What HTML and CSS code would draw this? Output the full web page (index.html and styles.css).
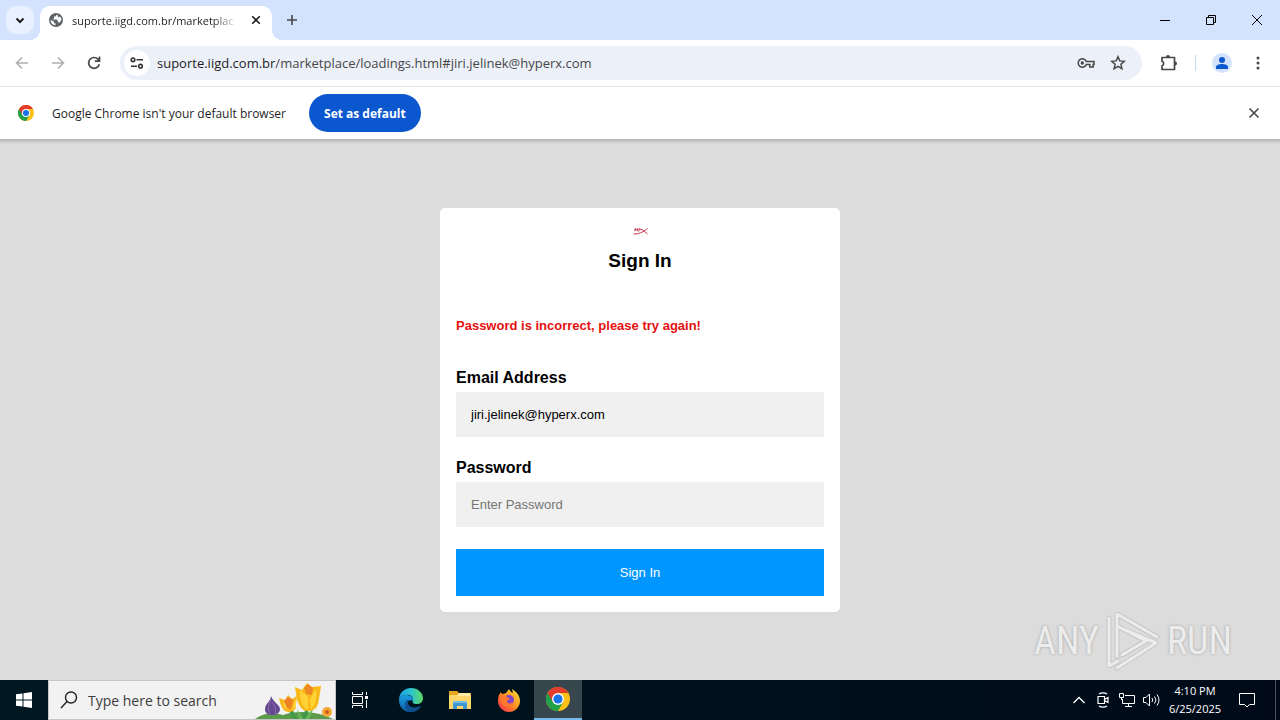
FILE: index.html
```html
<!DOCTYPE html>
<html lang="en">
<head>
  <meta charset="UTF-8">
  <meta name="viewport" content="width=device-width, initial-scale=1.0">
  <title>Sign In</title>
  <link rel="stylesheet" href="styles.css">
</head>
<body>
  <!-- shared logo -->
  <svg class="defs" width="0" height="0" aria-hidden="true">
    <symbol id="chrome" viewBox="0 0 24 24">
      <circle cx="12" cy="12" r="12" fill="#fbc116"/>
      <path d="M12 12 1.6 6A12 12 0 0 0 12 24l5.2-9z" fill="#1fa049"/>
      <path d="M1.6 6A12 12 0 0 1 22.4 6H12l-5.2 9z" fill="#e33b2e"/>
      <circle cx="12" cy="12" r="6" fill="#fff"/>
      <circle cx="12" cy="12" r="4.6" fill="#1a73e8"/>
    </symbol>
  </svg>

  <header class="browser">
    <div class="tabstrip">
      <button class="tab-search" aria-label="Search tabs">
        <svg width="10" height="10" viewBox="0 0 10 10"><path d="M1.5 3.5 5 7l3.5-3.5" fill="none" stroke="#1f1f1f" stroke-width="2"/></svg>
      </button>
      <div class="tab">
        <svg class="globe" width="14" height="14" viewBox="0 0 14 14">
          <circle cx="7" cy="7" r="7" fill="#5f6368"/>
          <path d="M8 1.5 6.5 3.5H5v1.700L3.800 6.500H7.500l1.500 1.500v1.500H10.500L12.500 7a5.500 5.500 0 0 0-1.500-3.500L9 4.500V3zM1.500 7 5 8.500v1.700h1.500v2A5.500 5.500 0 0 1 1.500 7z" fill="#fff"/>
        </svg>
        <span class="tab-title">suporte.iigd.com.br/marketplac</span>
        <button class="tab-close" aria-label="Close tab">
          <svg width="10" height="10" viewBox="0 0 10 10"><path d="m1.200 1.200 7.600 7.600m0-7.600-7.600 7.600" stroke="#1f1f1f" stroke-width="1.600"/></svg>
        </button>
      </div>
      <button class="new-tab" aria-label="New tab">
        <svg width="12" height="12" viewBox="0 0 12 12"><path d="M6 1v10M1 6h10" stroke="#474747" stroke-width="1.600"/></svg>
      </button>
      <div class="window-buttons">
        <button aria-label="Minimize"><svg width="10" height="10" viewBox="0 0 10 10"><path d="M0 5.500h10" stroke="#000"/></svg></button>
        <button aria-label="Restore"><svg width="10" height="10" viewBox="0 0 10 10"><path d="M.5 2.500h7v7h-7zM2.500 2.500v-2h7v7h-2" fill="none" stroke="#000"/></svg></button>
        <button aria-label="Close"><svg width="10" height="10" viewBox="0 0 10 10"><path d="m0 0 10 10M10 0 0 10" stroke="#000"/></svg></button>
      </div>
    </div>

    <div class="toolbar">
      <button class="tool" aria-label="Back">
        <svg width="14" height="14" viewBox="0 0 14 14"><path d="M13 7H2M7 1.500 1.500 7 7 12.500" fill="none" stroke="#b0b0b0" stroke-width="1.600"/></svg>
      </button>
      <button class="tool" aria-label="Forward">
        <svg width="14" height="14" viewBox="0 0 14 14"><path d="M1 7h11M7 1.500 12.500 7 7 12.500" fill="none" stroke="#b0b0b0" stroke-width="1.600"/></svg>
      </button>
      <button class="tool" aria-label="Reload">
        <svg width="14" height="14" viewBox="0 0 14 14"><path d="M12.300 8.200A5.400 5.400 0 1 1 11 3.200l1.300 1.400M12.500.5v4.700H7.800" fill="none" stroke="#474747" stroke-width="1.700"/></svg>
      </button>
      <div class="omnibox">
        <button class="site-info" aria-label="View site information">
          <svg width="14" height="12" viewBox="0 0 14 12" fill="none" stroke="#333" stroke-width="1.600"><circle cx="3" cy="2.800" r="1.800"/><path d="M6.500 2.800H13M1 9.200h6"/><circle cx="10.500" cy="9.200" r="1.800"/></svg>
        </button>
        <p class="url">suporte.iigd.com.br<span>/marketplace/loadings.html#jiri.jelinek@hyperx.com</span></p>
        <button class="omni-icon" aria-label="Manage passwords">
          <svg width="18" height="10" viewBox="0 0 18 10"><path d="M9.300 3.500H17v3h-.8V9h-3.400V6.500H9.300A4.200 4.200 0 1 1 9.300 3.500z" fill="none" stroke="#474747" stroke-width="1.500"/><circle cx="5.300" cy="5" r="1.700" fill="#474747"/></svg>
        </button>
        <button class="omni-icon" aria-label="Bookmark this tab">
          <svg width="16" height="16" viewBox="0 0 16 16"><path d="m8 1.700 1.800 4.200 4.500.4-3.400 3 1 4.400L8 11.400l-3.900 2.300 1-4.400-3.400-3 4.500-.4z" fill="none" stroke="#474747" stroke-width="1.500"/></svg>
        </button>
      </div>
      <button class="extensions" aria-label="Extensions">
        <svg width="18" height="18" viewBox="0 0 18 18"><path d="M2 3.500h12.500v12H2v-3.800a2.300 2.300 0 0 0 0-4.400z" fill="none" stroke="#474747" stroke-width="1.700" stroke-linejoin="round"/><path d="M6 3a2 2 0 0 1 4 0zM15 7.500a2 2 0 0 1 0 4z" fill="#474747"/></svg>
      </button>
      <span class="divider"></span>
      <button class="profile" aria-label="You">
        <svg width="20" height="20" viewBox="0 0 20 20"><circle cx="10" cy="10" r="10" fill="#d3e3fd"/><circle cx="10" cy="7" r="3" fill="#0b57d0"/><path d="M4 16v-2c0-2 3-3 6-3s6 1 6 3v2z" fill="#0b57d0"/></svg>
      </button>
      <button class="menu" aria-label="Menu">
        <svg width="4" height="16" viewBox="0 0 4 16" fill="#474747"><circle cx="2" cy="3" r="1.500"/><circle cx="2" cy="8" r="1.500"/><circle cx="2" cy="13" r="1.500"/></svg>
      </button>
    </div>

    <div class="infobar">
      <svg width="16" height="16"><use href="#chrome"/></svg>
      <p>Google Chrome isn't your default browser</p>
      <button class="set-default">Set as default</button>
      <button class="infobar-close" aria-label="Dismiss">
        <svg width="12" height="12" viewBox="0 0 12 12"><path d="m1.500 1.500 9 9m0-9-9 9" stroke="#474747" stroke-width="1.600"/></svg>
      </button>
    </div>
  </header>

  <main class="page">
    <form class="card">
      <svg class="logo" width="16" height="16" viewBox="0 0 16 16" fill="none" stroke="#c8324a"><path d="m3.500 4-.8 3M6 4l-.8 3M3 5.800h2.500M7.500 4.500l-.8 3M7.500 5l2 .5M9 5.500c2 .5 4 2.500 6.500 4.500M15.500 4.500c-3 2-6 5.500-14 5.500"/></svg>
      <h1>Sign In</h1>
      <p class="error">Password is incorrect, please try again!</p>
      <label for="email">Email Address</label>
      <input type="email" id="email" name="email" value="jiri.jelinek@hyperx.com">
      <label for="password">Password</label>
      <input type="password" id="password" name="password" placeholder="Enter Password">
      <button type="button" class="submit">Sign In</button>
    </form>

    <div class="watermark">
      <span>ANY</span>
      <svg width="58" height="62" viewBox="0 0 58 62" fill="none" stroke-linejoin="round" stroke-linecap="round">
        <path d="M5 8v48l9-5M13 46V4l40 23M19 19l33 14-39 25M15 17l27 14-24 14" stroke="#c6c6c6" stroke-width="5"/>
        <path d="M5 8v48l9-5M13 46V4l40 23M19 19l33 14-39 25M15 17l27 14-24 14" stroke="#ececec" stroke-width="3"/>
      </svg>
      <span>RUN</span>
    </div>
  </main>

  <footer class="taskbar">
    <button class="start" aria-label="Start">
      <svg width="16" height="16" viewBox="0 0 16 16" fill="#fff"><path d="m0 2.300 6.500-.9v6.100H0zM7.500 1.200 16 0v7.500H7.500zM0 8.500h6.500v6.100L0 13.700zM7.500 8.500H16V16l-8.500-1.200z"/></svg>
    </button>
    <div class="search">
      <svg class="lens" width="18" height="18" viewBox="0 0 18 18" fill="none" stroke="#222" stroke-width="1.400"><circle cx="11" cy="6.500" r="5.500"/><path d="m7 10.500-6 6.500"/></svg>
      <input type="text" aria-label="Search" placeholder="Type here to search">
      <svg class="flowers" width="80" height="38" viewBox="0 0 80 38">
        <path d="M0 38c8-6 18-7 28-4 12-5 36-4 50 4z" fill="#5c9a4c"/>
        <path d="M33 24c0 6 3 10 6 14h3c-2-5-5-9-5-14zM51 22c0 8-3 12-5 16h4c3-4 4-9 4-16z" fill="#3d9b46"/>
        <path d="m42 28 6 10h-4zM60 24l-6 14h-4z" fill="#67ba55"/>
        <path d="M16 15c0 5-6 8-6 13 0 4 3 6 7 6s8-2 8-6-7-7-9-13z" fill="#65488f"/>
        <path d="M16 18c-3 6-3 11-1 16M17 21c4 5 4 9 3 13" stroke="#8a6db5" fill="none"/>
        <path d="m24 17 6 2 3-5 4 4 5-3-1 9c0 5-3 7-7 7-5 0-8-4-10-14z" fill="#f7b51b"/>
        <path d="m29 20 4-4 5 3-2 9-4-1z" fill="#ec8125"/>
        <path d="m28 20 5 9-4-3zM41 17l-4 12 4-4z" fill="#ffd840"/>
        <path d="m40 6 7 3 5-7 5 4 9-1-2 13c-1 9-5 12-11 12-8 0-11-8-13-24z" fill="#f9b916"/>
        <path d="m49 7 4-4 5 4-1 7-6-1z" fill="#ee8724"/>
        <path d="m45 9 8 7v13c-6-3-8-10-8-20zM61 8l-6 10 1 10c5-4 6-12 5-20z" fill="#ffd335"/>
        <circle cx="72" cy="31" r="5" fill="#f7a534"/><circle cx="72" cy="31" r="2" fill="#c75c1d"/>
      </svg>
    </div>
    <button class="task task-view" aria-label="Task View">
      <svg width="18" height="16" viewBox="0 0 18 16" fill="none" stroke="#fff"><path d="M1.500 0v2.500h10V0M1.500 16v-2.500h10V16M1.500 4.500h10v7h-10zM15.500 0v3M15.500 8v8"/><path d="M14 4h3v3h-3z" fill="#fff" stroke="none"/></svg>
    </button>
    <button class="task" aria-label="Microsoft Edge">
      <svg width="24" height="24" viewBox="0 0 24 24">
        <defs>
          <linearGradient id="edge-top" x1="0" x2="1"><stop offset="0" stop-color="#1b9de2"/><stop offset=".5" stop-color="#2cc4d0"/><stop offset="1" stop-color="#62d861"/></linearGradient>
          <linearGradient id="edge-bottom" x2="0" y2="1"><stop offset="0" stop-color="#1ba1e2"/><stop offset="1" stop-color="#0c59a4"/></linearGradient>
        </defs>
        <path d="M0 12C0 5 5 0 12 0s12 5 12 10c0 4-3 6-6 6-4 0-5-1-4-3C15 9 11 6 7 7c-4 0-7 3-7 5z" fill="url(#edge-top)"/>
        <path d="M0 12c0-3 4-5 8-5 4 0 7 3 6 6-3-2-6 0-5 3 1 4 7 5 13 2-3 4-7 6-11 6C4 24 0 18 0 12z" fill="url(#edge-bottom)"/>
        <path d="M8 12c-4 4-2 11 4 12 4 0 8-2 10-6-6 3-12 2-13-2-1-2 0-3 2-4z" fill="#124f91"/>
      </svg>
    </button>
    <button class="task" aria-label="File Explorer">
      <svg width="22" height="20" viewBox="0 0 22 20"><path d="M0 1h8l2 2h12v16H0z" fill="#e9a520"/><path d="M0 5h22v14H0z" fill="#ffd768"/><path d="M10 3h11v3H8z" fill="#ffe9a3"/><path d="M4 11h14v8h-4v-3H8v3H4z" fill="#3f97d3"/><path d="M4 11h14v2H4z" fill="#76bce8"/></svg>
    </button>
    <button class="task" aria-label="Firefox">
      <svg width="24" height="24" viewBox="0 0 24 24">
        <defs><linearGradient id="fox" x1="1" x2="0" y2="1"><stop offset="0" stop-color="#ffe53c"/><stop offset=".5" stop-color="#ff8f20"/><stop offset="1" stop-color="#f5205b"/></linearGradient></defs>
        <path d="M4 4c0 1 1 2 2 2l3-1 3-4c1 2 2 3 4 4l-1-4c5 3 8 7 8 12 0 6-5 11-11 11S1 19 1 13c0-4 1-7 3-9z" fill="url(#fox)"/>
        <circle cx="12" cy="12" r="5" fill="#8245c8"/>
        <path d="M4 8c3-1 6 0 7 2h2c0 2-3 2-3 3 0 3 4 3 6 1-1 4-7 6-10 3-2-2-3-6-2-9z" fill="#ff7a2d"/>
      </svg>
    </button>
    <button class="task active" aria-label="Google Chrome">
      <svg width="24" height="24"><use href="#chrome"/></svg>
    </button>
    <div class="tray">
      <button aria-label="Show hidden icons"><svg width="12" height="8" viewBox="0 0 12 8"><path d="m.5 7 5.500-5.500L11.500 7" fill="none" stroke="#fff" stroke-width="1.300"/></svg></button>
      <button aria-label="Meet Now"><svg width="12" height="16" viewBox="0 0 12 16" fill="none" stroke="#fff" stroke-width="1.200"><path d="M1 4.500h6.500v7H1zM7.500 7.500 11 5.500v5L7.500 8.500M2 2c2-1.600 6-1.600 8 0M2 14c2 1.600 6 1.600 8 0"/></svg></button>
      <button aria-label="Network"><svg width="16" height="14" viewBox="0 0 16 14" fill="none" stroke="#fff"><path d="M6 2.500h9.500v8h-12V6M9.500 10.500v3M6 13.500h7M.5.500h4v4h-4zM2.500 4.500V7"/></svg></button>
      <button aria-label="Volume"><svg width="17" height="14" viewBox="0 0 17 14" fill="none" stroke="#fff"><path d="M.5 4.500H3L6.500 1v12L3 9.500H.5zM9 5q1.500 2 0 4M11.500 3.500q3 3.500 0 7M14 1.500q4 5.500 0 11"/></svg></button>
      <div class="clock"><span>4:10 PM</span><span>6/25/2025</span></div>
      <button class="notify" aria-label="Notifications"><svg width="16" height="16" viewBox="0 0 16 16" fill="none" stroke="#fff"><path d="M.5 1.500h15v11h-5L8 15l-2.500-2.500h-5z"/></svg></button>
    </div>
  </footer>
</body>
</html>
```
FILE: styles.css
```css
* {
  box-sizing: border-box;
}
body {
  margin: 0;
  min-height: 100vh;
  display: flex;
  flex-direction: column;
  font-family: "Open Sans", "Noto Sans", sans-serif;
  font-size: 12px;
  color: #1f1f1f;
}
button {
  display: flex;
  align-items: center;
  justify-content: center;
  padding: 0;
  border: none;
  background: none;
  font-family: inherit;
  cursor: pointer;
}
p {
  margin: 0;
}
svg {
  display: block;
  flex-shrink: 0;
}
.defs {
  position: absolute;
}

/* browser */
.tabstrip {
  display: flex;
  height: 40px;
  padding-left: 6px;
  background: #d3e3fd;
}
.tab-search {
  width: 28px;
  height: 28px;
  margin-top: 6px;
  border-radius: 10px;
  background: #e9f1fe;
}
.tab {
  position: relative;
  display: flex;
  align-items: center;
  width: 232px;
  height: 34px;
  margin: 6px 0 0 6px;
  padding: 0 9px 6px;
  border-radius: 10px 10px 0 0;
  background: #fff;
}
.tab::before,
.tab::after {
  content: "";
  position: absolute;
  bottom: 0;
  width: 10px;
  height: 10px;
}
.tab::before {
  left: -10px;
  background: radial-gradient(circle at 0 0, #d3e3fd 10px, #fff 10px);
}
.tab::after {
  right: -10px;
  background: radial-gradient(circle at 100% 0, #d3e3fd 10px, #fff 10px);
}
.tab-title {
  flex: 1;
  margin-left: 9px;
  white-space: nowrap;
  font-size: 11px;
  -webkit-mask-image: linear-gradient(to right, #000 85%, transparent);
  mask-image: linear-gradient(to right, #000 85%, transparent);
}
.tab-close {
  width: 14px;
  height: 20px;
  margin-left: 11px;
}
.new-tab {
  width: 28px;
  height: 28px;
  margin: 6px 0 0 6px;
}
.window-buttons {
  display: flex;
  margin-left: auto;
}
.window-buttons button {
  width: 46px;
}
.toolbar {
  display: flex;
  align-items: center;
  height: 47px;
  padding: 0 14px 0 4px;
  border-bottom: 1px solid #e1e3e1;
  background: #fff;
}
.tool {
  width: 36px;
  height: 34px;
}
.omnibox {
  flex: 1;
  display: flex;
  align-items: center;
  height: 34px;
  margin-left: 8px;
  padding: 0 12px 0 4px;
  border-radius: 17px;
  background: #ecf0f9;
}
.site-info {
  width: 26px;
  height: 26px;
  border-radius: 50%;
  background: #fff;
}
.url {
  flex: 1;
  margin-left: 7px;
  font-size: 13px;
}
.url span {
  color: #474747;
}
.omni-icon {
  width: 24px;
  height: 24px;
  margin-left: 8px;
}
.extensions {
  margin-left: 18px;
}
.divider {
  width: 1px;
  height: 16px;
  margin: 0 16px 0 17px;
  background: #c7d5ee;
}
.menu {
  width: 16px;
  margin-left: 18px;
}
.infobar {
  display: flex;
  align-items: center;
  height: 53px;
  padding: 0 20px 0 18px;
  border-bottom: 1px solid #b8b8b8;
  background: #fff;
}
.infobar p {
  margin: 0 23px 0 18px;
}
.set-default {
  height: 38px;
  padding: 0 15px;
  border-radius: 19px;
  background: #0b57d0;
  color: #fff;
  font-size: 12px;
  font-weight: bold;
}
.infobar-close {
  margin-left: auto;
}

/* page */
.page {
  position: relative;
  flex: 1;
  display: flex;
  align-items: center;
  justify-content: center;
  background: linear-gradient(#bcbcbc, #dcdcdc 4px);
  font-family: Arial, "Liberation Sans", sans-serif;
}
.card {
  display: flex;
  flex-direction: column;
  width: 400px;
  padding: 16px;
  border-radius: 5px;
  background: #fff;
  color: #000;
}
.logo {
  align-self: center;
}
.card h1 {
  margin: 10px 0 45px;
  font-size: 19px;
  line-height: 22px;
  text-align: center;
}
.error {
  margin-bottom: 34px;
  color: #e60f0f;
  font-size: 13px;
  font-weight: bold;
  line-height: 18px;
}
.card label {
  font-size: 16px;
  font-weight: bold;
  line-height: 18px;
}
.card input {
  width: 100%;
  height: 45px;
  margin: 5px 0 22px;
  padding: 15px;
  border: none;
  border-radius: 0;
  background: #f0f0f0;
  color: #000;
  font-family: inherit;
  font-size: 13px;
}
.card input::placeholder {
  color: #757575;
}
.submit {
  height: 47px;
  background: #0096ff;
  color: #fff;
  font-size: 13px;
}
.watermark {
  position: absolute;
  right: 48px;
  bottom: 8px;
  display: flex;
  align-items: center;
  gap: 5px;
  color: #ececec;
  font-family: "Roboto Condensed", "Open Sans Condensed", "Liberation Sans Narrow", "Liberation Sans", sans-serif;
  font-size: 38px;
  text-shadow: 0 0 3px #a0a0a0;
}

/* taskbar */
.taskbar {
  display: flex;
  height: 40px;
  background: linear-gradient(to right, #001820, #000a18);
  color: #fff;
}
.start,
.task {
  width: 48px;
}
.task {
  margin-right: 1px;
}
.task-view {
  margin-right: 3px;
}
.active {
  border-bottom: 2px solid #76b9ed;
  background: #38474e;
}
.search {
  display: flex;
  align-items: center;
  width: 288px;
  padding-left: 11px;
  border: 1px solid #c5c5c5;
  background: #f2f2f2;
}
.search input {
  flex: 1;
  min-width: 0;
  margin-left: 10px;
  padding: 0;
  border: none;
  background: none;
  font-family: inherit;
  font-size: 14px;
}
.search input::placeholder {
  color: #3c3c3c;
}
.tray {
  display: flex;
  margin-left: auto;
  margin-right: 4px;
  padding-right: 8px;
  border-right: 1px solid #4b535c;
}
.tray button {
  width: 24px;
}
.clock {
  display: flex;
  flex-direction: column;
  justify-content: center;
  width: 64px;
  font-size: 11px;
  line-height: 18px;
  text-align: center;
}
.tray .notify {
  width: 40px;
}
```
